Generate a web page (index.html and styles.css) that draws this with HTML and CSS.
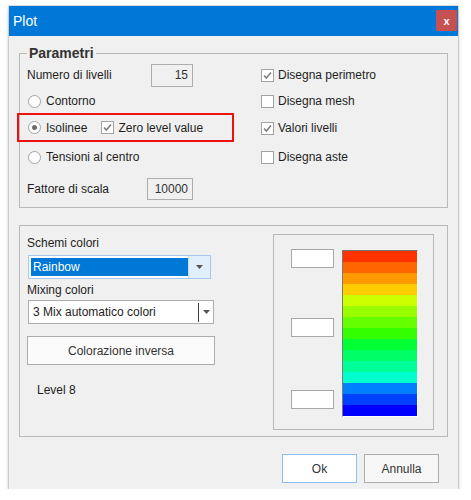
FILE: index.html
```html
<!DOCTYPE html>
<html lang="it">
<head>
<meta charset="utf-8">
<title>Plot</title>
<link rel="stylesheet" href="styles.css">
</head>
<body>
<div class="window">
  <div class="titlebar">
    <span class="title">Plot</span>
    <span class="close">x</span>
  </div>
  <div class="content">
    <fieldset class="group params">
      <legend>Parametri</legend>
      <div class="pgrid">
        <div class="cell field"><span>Numero di livelli</span><span class="num n15">15</span></div>
        <div class="cell"><span class="cb"><svg viewBox="0 0 11 11" width="11" height="11"><polyline points="2,5.5 4.3,8 9,2.5" /></svg></span>Disegna perimetro</div>

        <div class="cell"><span class="rb"></span>Contorno</div>
        <div class="cell"><span class="cb"></span>Disegna mesh</div>

        <div class="cell"><span class="marked"><span class="rb on"></span>Isolinee<span class="cb gap"><svg viewBox="0 0 11 11" width="11" height="11"><polyline points="2,5.5 4.3,8 9,2.5" /></svg></span>Zero level value</span></div>
        <div class="cell"><span class="cb"><svg viewBox="0 0 11 11" width="11" height="11"><polyline points="2,5.5 4.3,8 9,2.5" /></svg></span>Valori livelli</div>

        <div class="cell"><span class="rb"></span>Tensioni al centro</div>
        <div class="cell"><span class="cb"></span>Disegna aste</div>

        <div class="cell field"><span>Fattore di scala</span><span class="num n10000">10000</span></div>
        <div class="cell"></div>
      </div>
    </fieldset>

    <div class="group colorsgroup">
      <div class="colors">
        <div class="label">Schemi colori</div>
        <div class="combo selcombo">
          <span class="selected">Rainbow</span>
          <span class="drop"><svg viewBox="0 0 7 4" width="7" height="4"><polygon points="0,0 7,0 3.5,4" /></svg></span>
        </div>
        <div class="label mix">Mixing colori</div>
        <div class="combo plain">
          <span class="value">3 Mix automatico colori</span>
          <span class="sep"></span>
          <span class="drop2"><svg viewBox="0 0 7 4" width="7" height="4"><polygon points="0,0 7,0 3.5,4" /></svg></span>
        </div>
        <div class="button wide">Colorazione inversa</div>
        <div class="level">Level 8</div>
      </div>

      <div class="scale">
        <div class="values">
          <div class="vbox"></div>
          <div class="vbox mid"></div>
          <div class="vbox low"></div>
        </div>
        <div class="bar">
          <div class="stripe" style="background:#ff3300"></div>
          <div class="stripe" style="background:#ff6600"></div>
          <div class="stripe" style="background:#ff9900"></div>
          <div class="stripe" style="background:#ffcc00"></div>
          <div class="stripe" style="background:#ccff00"></div>
          <div class="stripe" style="background:#99ff00"></div>
          <div class="stripe" style="background:#66ff00"></div>
          <div class="stripe" style="background:#33ff00"></div>
          <div class="stripe" style="background:#00ff33"></div>
          <div class="stripe" style="background:#00ff66"></div>
          <div class="stripe" style="background:#00ff99"></div>
          <div class="stripe" style="background:#00ffcc"></div>
          <div class="stripe" style="background:#0080ff"></div>
          <div class="stripe" style="background:#0040ff"></div>
          <div class="stripe" style="background:#0000ff"></div>
        </div>
      </div>
    </div>

    <div class="footer">
      <div class="button ok">Ok</div>
      <div class="button">Annulla</div>
    </div>
  </div>
</div>
</body>
</html>
```

FILE: styles.css
```css
* {
  box-sizing: border-box;
}

body {
  margin: 0;
  background: #ffffff;
  font-family: "Liberation Sans", Arial, sans-serif;
  font-size: 12px;
  color: #1e1e1e;
}

/* dialog frame */
.window {
  margin: 6px 0 0 9px;
  width: 449px;
  height: 483px;
  background: #f0f0f0;
  box-shadow: 0 0 0 1px rgba(0, 0, 0, 0.1), 0 2px 4px rgba(0, 0, 0, 0.28);
  display: flex;
  flex-direction: column;
}

.titlebar {
  height: 30px;
  background: #0078d7;
  display: flex;
  align-items: center;
  justify-content: space-between;
  padding: 0 1px 0 4px;
}

.title {
  color: #ffffff;
  font-size: 14px;
}

.close {
  align-self: flex-start;
  margin-top: 4px;
  width: 21px;
  height: 21px;
  background: #c75050;
  color: #ffffff;
  font-weight: bold;
  font-size: 11px;
  display: flex;
  align-items: center;
  justify-content: center;
}

.content {
  flex: 1;
  padding: 0 10px;
  display: flex;
  flex-direction: column;
}

/* group boxes */
.params {
  margin: 9px 0 0;
  padding: 2px 7px 2px;
  border: 1px solid #b9b9b9;
  min-width: 0;
}

.params legend {
  padding: 0 2px;
  font-weight: bold;
  font-size: 14px;
  line-height: 16px;
  color: #333333;
}

.pgrid {
  display: grid;
  grid-template-columns: 234px 1fr;
  grid-template-rows: 24px 28px 26px 32px 32px;
}

.cell {
  display: flex;
  align-items: center;
}

.field {
  width: 166px;
  justify-content: space-between;
}

.num {
  border: 1px solid #adadad;
  background: #f0f0f0;
  text-align: right;
  padding-right: 4px;
  color: #333333;
}

.n15 {
  width: 42px;
  height: 23px;
  line-height: 21px;
}

.n10000 {
  width: 46px;
  height: 22px;
  line-height: 20px;
}

/* check boxes and radio buttons */
.cb {
  flex: none;
  width: 13px;
  height: 13px;
  border: 1px solid #a3a3a3;
  background: #ffffff;
  margin-right: 4px;
  display: flex;
  align-items: center;
  justify-content: center;
}

.cb svg polyline {
  fill: none;
  stroke: #7c7c7c;
  stroke-width: 1.5;
}

.cb.gap {
  margin-left: 14px;
}

.rb {
  flex: none;
  width: 13px;
  height: 13px;
  margin: 0 5px 0 1px;
  border: 1px solid #a3a3a3;
  border-radius: 50%;
  background: #ffffff;
  display: flex;
  align-items: center;
  justify-content: center;
}

.rb.on::after {
  content: "";
  width: 5px;
  height: 5px;
  border-radius: 50%;
  background: #6d6d6d;
}

/* highlighted option row */
.marked {
  display: flex;
  align-items: center;
  align-self: flex-start;
  width: 213px;
  height: 25px;
  margin-left: -8px;
  padding-left: 8px;
  outline: 2px solid #ee1111;
}

/* colour settings group */
.colorsgroup {
  margin-top: 17px;
  border: 1px solid #b9b9b9;
  padding: 8px 13px 6px 7px;
  display: flex;
}

.colors {
  width: 188px;
  display: flex;
  flex-direction: column;
}

.label {
  line-height: 18px;
}

.label.mix {
  margin-top: 2px;
}

.combo {
  height: 24px;
  margin-left: 1px;
  background: #ffffff;
  display: flex;
}

.selcombo {
  width: 183px;
  margin-top: 3px;
  border: 1px solid #a6c8ec;
  padding: 2px 0 2px 2px;
}

.selected {
  flex: 1;
  background: #0078d7;
  color: #ffffff;
  line-height: 18px;
  padding-left: 2px;
}

.drop {
  width: 22px;
  margin: -2px 0;
  background: #e1eefb;
  border-left: 1px solid #c4dcf4;
  display: flex;
  align-items: center;
  justify-content: center;
}

.drop svg polygon,
.drop2 svg polygon {
  fill: #555555;
}

.plain {
  width: 186px;
  margin-top: 1px;
  border: 1px solid #adadad;
  align-items: center;
}

.value {
  flex: 1;
  padding-left: 4px;
}

.sep {
  width: 1px;
  height: 19px;
  background: #3a3a3a;
}

.drop2 {
  width: 14px;
  display: flex;
  align-items: center;
  justify-content: center;
}

.button {
  height: 29px;
  border: 1px solid #adadad;
  background: #fbfbfb;
  color: #333333;
  display: flex;
  align-items: center;
  justify-content: center;
}

.button.wide {
  width: 188px;
  margin-top: 12px;
}

.level {
  margin-top: 16px;
  padding-left: 10px;
  line-height: 18px;
}

/* colour scale preview */
.scale {
  margin-left: auto;
  width: 161px;
  height: 196px;
  border: 1px solid #b9b9b9;
  padding: 14px 15px 0 17px;
  display: flex;
  gap: 8px;
}

.values {
  width: 43px;
  display: flex;
  flex-direction: column;
}

.vbox {
  height: 19px;
  background: #ffffff;
  border: 1px solid #a8a8a8;
}

.vbox.mid {
  margin-top: 50px;
}

.vbox.low {
  margin-top: 53px;
}

.bar {
  width: 76px;
  height: 167px;
  margin-top: 1px;
  border-top: 1px solid #7a7a7a;
  border-left: 1px solid #7a7a7a;
  border-right: 1px solid #ffffff;
  border-bottom: 1px solid #ffffff;
  display: flex;
  flex-direction: column;
}

.stripe {
  height: 11px;
}

/* dialog buttons */
.footer {
  margin-top: 17px;
  padding-right: 9px;
  display: flex;
  justify-content: flex-end;
  gap: 7px;
}

.footer .button {
  width: 75px;
  background: #f7f7f7;
}

.footer .button.ok {
  background: #ffffff;
  border-color: #8fbdee;
}
```
